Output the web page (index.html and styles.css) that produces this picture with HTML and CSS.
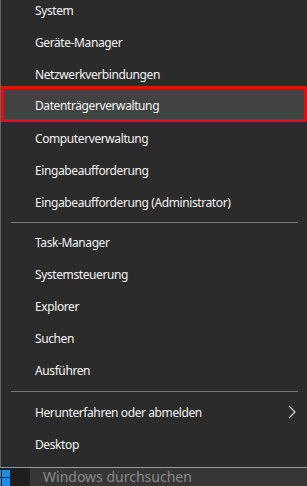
FILE: index.html
```html
<!DOCTYPE html>
<html>
<head>
    <title>Schnellzugriffsmenü</title>
    <meta charset="UTF-8">
    <meta name="viewport" content="width=device-width, initial-scale=1.0">
    <link rel="stylesheet" href="styles.css">
</head>
<body>
    <div class="menu">
        <div class="item">System</div>
        <div class="item">Geräte-Manager</div>
        <div class="item">Netzwerkverbindungen</div>
        <div class="item active">Datenträgerverwaltung</div>
        <div class="item">Computerverwaltung</div>
        <div class="item">Eingabeaufforderung</div>
        <div class="item">Eingabeaufforderung (Administrator)</div>
        <div class="separator"></div>
        <div class="item">Task-Manager</div>
        <div class="item">Systemsteuerung</div>
        <div class="item">Explorer</div>
        <div class="item">Suchen</div>
        <div class="item">Ausführen</div>
        <div class="separator lower"></div>
        <div class="item has-sub">
            <span>Herunterfahren oder abmelden</span>
            <svg class="chevron" width="8" height="14" viewBox="0 0 8 14">
                <path d="M1 1 L7 7 L1 13" fill="none" stroke="#d0d0d0" stroke-width="1.2"/>
            </svg>
        </div>
        <div class="item">Desktop</div>
    </div>

    <div class="taskbar">
        <div class="start">
            <svg width="16" height="16" viewBox="0 0 16 16">
                <rect x="0" y="0" width="7" height="7" fill="#1c8ee6"/>
                <rect x="8" y="0" width="8" height="7" fill="#1c8ee6"/>
                <rect x="0" y="8" width="7" height="8" fill="#1c8ee6"/>
                <rect x="8" y="8" width="8" height="8" fill="#1c8ee6"/>
            </svg>
        </div>
        <div class="search">Windows durchsuchen</div>
    </div>
</body>
</html>
```

FILE: styles.css
```css
body {
    font-family: 'Noto Sans', 'Open Sans', sans-serif;
    margin: 0;
    background-color: #2b2b2b;
    overflow: hidden;
}

.menu {
    margin-top: -6px;
    background-color: #2b2b2b;
    border-left: 1px solid #666;
    border-bottom: 1px solid #9a9a9a;
    padding-bottom: 7px;
}

.item {
    height: 32px;
    display: flex;
    align-items: center;
    padding-left: 34px;
    padding-right: 10px;
    font-size: 12px;
    letter-spacing: -0.4px;
    color: #f4f4f4;
}

.item.active {
    height: 36px;
    margin-top: -4px;
    padding-top: 3px;
    box-sizing: border-box;
    background-color: #424242;
    box-shadow: inset 0 0 0 3px #e01010;
}

.has-sub {
    justify-content: space-between;
}

.chevron {
    display: block;
    margin-right: 1px;
}

.separator {
    height: 1px;
    background-color: #7a7a7a;
    margin: 4px 9px 3px 10px;
}

.separator.lower {
    margin-top: 5px;
    margin-bottom: 4px;
}

.taskbar {
    display: flex;
    height: 18px;
    background-color: #1e1e1e;
}

.start {
    width: 30px;
    padding-top: 2px;
    overflow: hidden;
}

.start svg {
    display: block;
    margin-left: -6px;
}

.search {
    flex: 1;
    background-color: #363636;
    color: #8a8a8a;
    font-size: 14px;
    padding-left: 13px;
    line-height: 18px;
}
```
